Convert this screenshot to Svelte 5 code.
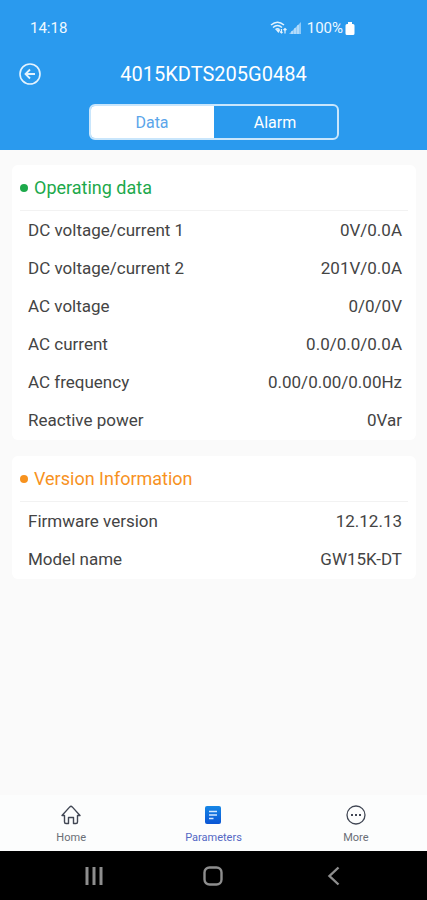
<script lang="ts">
    type Row = { label: string; value: string };
    type Section = { title: string; tone: string; rows: Row[] };

    const sections: Section[] = [
        {
            title: "Operating data",
            tone: "green",
            rows: [
                { label: "DC voltage/current 1", value: "0V/0.0A" },
                { label: "DC voltage/current 2", value: "201V/0.0A" },
                { label: "AC voltage", value: "0/0/0V" },
                { label: "AC current", value: "0.0/0.0/0.0A" },
                { label: "AC frequency", value: "0.00/0.00/0.00Hz" },
                { label: "Reactive power", value: "0Var" }
            ]
        },
        {
            title: "Version Information",
            tone: "orange",
            rows: [
                { label: "Firmware version", value: "12.12.13" },
                { label: "Model name", value: "GW15K-DT" }
            ]
        }
    ];

    let tab = $state("Data");
</script>

<div class="screen">
    <header>
        <div class="status">
            <span>14:18</span>
            <div class="status-right">
                <svg width="17" height="14" viewBox="0 0 17 14" fill="none" stroke="#e4f3fe">
                    <path d="M1 4Q7.500-1.500 14 4M3 6.500Q7.500 2.500 12 6.500M5.500 8.500Q7.500 7 9.500 8.500" stroke-width="1.500" />
                    <path d="M8.500 12 5.500 8.500h5z" fill="#e4f3fe" stroke="none" />
                    <path d="M11.500 8v4M10 10.500l1.500 1.500 1-1M15 12.500V7.500M13.500 9 15 7.500 16.500 9" stroke-width="1.200" />
                </svg>
                <svg width="12" height="12" viewBox="0 0 12 12">
                    <path d="M0 12 12 0v12z" fill="#8fcaf8" />
                    <path d="M3 9v3M6 6v6M9 3v9" stroke="#d5ecfd" stroke-width="1" />
                </svg>
                <span class="battery-text">100%</span>
                <svg width="10" height="13" viewBox="0 0 10 13">
                    <path d="M3 0h4v2h1a1.500 1.500 0 0 1 1.500 1.500V11.500A1.500 1.500 0 0 1 8 13H2A1.500 1.500 0 0 1 .5 11.500V3.500A1.500 1.500 0 0 1 2 2h1z" fill="#fff" />
                </svg>
            </div>
        </div>

        <div class="title-bar">
            <button class="back" aria-label="Back">
                <svg width="24" height="24" viewBox="0 0 24 24" fill="none" stroke="#e4f3fe" stroke-width="1.600">
                    <circle cx="12" cy="12" r="10" />
                    <path d="M17 12H8M12 7.500 7.500 12l4.500 4.500" stroke-width="1.800" />
                </svg>
            </button>
            <h1>4015KDTS205G0484</h1>
        </div>

        <div class="tabs">
            {#each ["Data", "Alarm"] as name}
                <button class:active={tab === name} onclick={() => (tab = name)}>{name}</button>
            {/each}
        </div>
    </header>

    <main>
        {#each sections as section}
            <section class="card">
                <h2 class={section.tone}>{section.title}</h2>
                <dl>
                    {#each section.rows as row}
                        <div class="row">
                            <dt>{row.label}</dt>
                            <dd>{row.value}</dd>
                        </div>
                    {/each}
                </dl>
            </section>
        {/each}
    </main>

    <nav class="tab-bar">
        <a href="#home">
            <svg width="20" height="20" viewBox="0 0 20 20" fill="none" stroke="#414754" stroke-width="1.400" stroke-linejoin="round" stroke-linecap="round">
                <path d="M3.500 10.500H1L8.800 1.900a1.700 1.700 0 0 1 2.400 0L19 10.500h-2.500V17a1.500 1.500 0 0 1-1.500 1.500h-2.500V12.500h-5v6H5A1.500 1.500 0 0 1 3.500 17z" />
            </svg>
            Home
        </a>
        <a href="#parameters" class="current">
            <svg width="20" height="20" viewBox="0 0 20 20">
                <defs>
                    <linearGradient id="tile" x1="0" y1="0" x2="0" y2="1">
                        <stop offset="0" stop-color="#1687e6" />
                        <stop offset="1" stop-color="#0a55d4" />
                    </linearGradient>
                </defs>
                <rect x="2" y="1" width="16" height="18" rx="2" fill="url(#tile)" />
                <path d="M6 6.500h8M6 10h8M6 13.500h4.500" stroke="#d3e8ff" stroke-width="1.700" />
            </svg>
            Parameters
        </a>
        <a href="#more">
            <svg width="20" height="20" viewBox="0 0 20 20" fill="none" stroke="#414754" stroke-width="1.300">
                <circle cx="10" cy="10" r="9" />
                <path d="M5 10h2M9 10h2M13 10h2" stroke-width="1.800" />
            </svg>
            More
        </a>
    </nav>

    <div class="system-bar">
        <button aria-label="Recent apps">
            <svg width="20" height="20" viewBox="0 0 20 20" stroke="#8e8e8e" stroke-width="3">
                <path d="M3 1v18M10 1v18M17 1v18" />
            </svg>
        </button>
        <button aria-label="Home">
            <svg width="20" height="20" viewBox="0 0 20 20" fill="none" stroke="#8e8e8e" stroke-width="2.400">
                <rect x="1.500" y="1.500" width="17" height="17" rx="5" />
            </svg>
        </button>
        <button aria-label="Back">
            <svg width="20" height="20" viewBox="0 0 20 20" fill="none" stroke="#8e8e8e" stroke-width="2.400">
                <path d="M15.500 1.500 6.500 10l9 8.500" />
            </svg>
        </button>
    </div>
</div>

<style>
    :global(body) {
        background: #fafafa;
    }

    .screen {
        min-height: 100vh;
        display: flex;
        flex-direction: column;
        background: #fafafa;
        font-family: Roboto, "Liberation Sans", sans-serif;
        color: #444;
    }

    svg {
        display: block;
        flex: none;
    }

    button {
        border: 0;
        padding: 0;
        background: none;
        font: inherit;
        color: inherit;
        cursor: pointer;
    }

    header {
        padding: 16px 0 10px;
        background: #2a9aee;
        color: #fff;
    }

    .status {
        display: flex;
        align-items: center;
        justify-content: space-between;
        height: 24px;
        padding: 0 72px 0 30px;
        font-size: 15px;
        color: #eef8ff;
    }

    .status-right {
        display: flex;
        align-items: center;
        gap: 2px;
    }

    .battery-text {
        margin-left: 4px;
    }

    .title-bar {
        display: grid;
        grid-template-columns: 48px 1fr 48px;
        align-items: center;
        height: 64px;
        padding-top: 4px;
        box-sizing: border-box;
    }

    .back {
        justify-self: end;
        padding-right: 6px;
    }

    h1 {
        margin: 0;
        font-size: 20px;
        font-weight: 400;
        text-align: center;
    }

    .tabs {
        display: flex;
        width: 250px;
        height: 36px;
        margin: 0 auto;
        box-sizing: border-box;
        border: 2px solid #c9e6fc;
        border-radius: 6px;
        overflow: hidden;
        font-size: 16px;
    }

    .tabs button {
        flex: 1;
    }

    .tabs .active {
        background: #fff;
        color: #5ba5ea;
    }

    main {
        flex: 1;
        display: flex;
        flex-direction: column;
        gap: 16px;
        padding: 15px 11px 16px 12px;
    }

    .card {
        padding: 0 8px 1px;
        border-radius: 6px;
        background: #fff;
    }

    h2 {
        display: flex;
        align-items: center;
        gap: 6px;
        height: 46px;
        margin: 0;
        border-bottom: 1px solid #f2f2f2;
        box-sizing: border-box;
        font-size: 18px;
        font-weight: 400;
    }

    h2::before {
        content: "";
        width: 8px;
        height: 8px;
        border-radius: 50%;
        background: currentColor;
    }

    .green {
        color: #1da94b;
    }

    .orange {
        color: #f7921e;
    }

    dl {
        margin: 0;
    }

    .row {
        display: flex;
        align-items: center;
        justify-content: space-between;
        height: 38px;
        padding: 0 6px 0 8px;
        font-size: 17px;
    }

    dd {
        margin: 0;
    }

    .tab-bar {
        display: flex;
        height: 56px;
        background: #fcfdfd;
    }

    .tab-bar a {
        flex: 1;
        display: flex;
        flex-direction: column;
        align-items: center;
        gap: 6px;
        padding-top: 10px;
        font-size: 11px;
        color: #6a6e76;
        text-decoration: none;
    }

    .tab-bar .current {
        color: #5468c4;
    }

    .system-bar {
        display: flex;
        justify-content: space-around;
        align-items: center;
        height: 49px;
        padding: 0 34px;
        background: #000;
    }
</style>
